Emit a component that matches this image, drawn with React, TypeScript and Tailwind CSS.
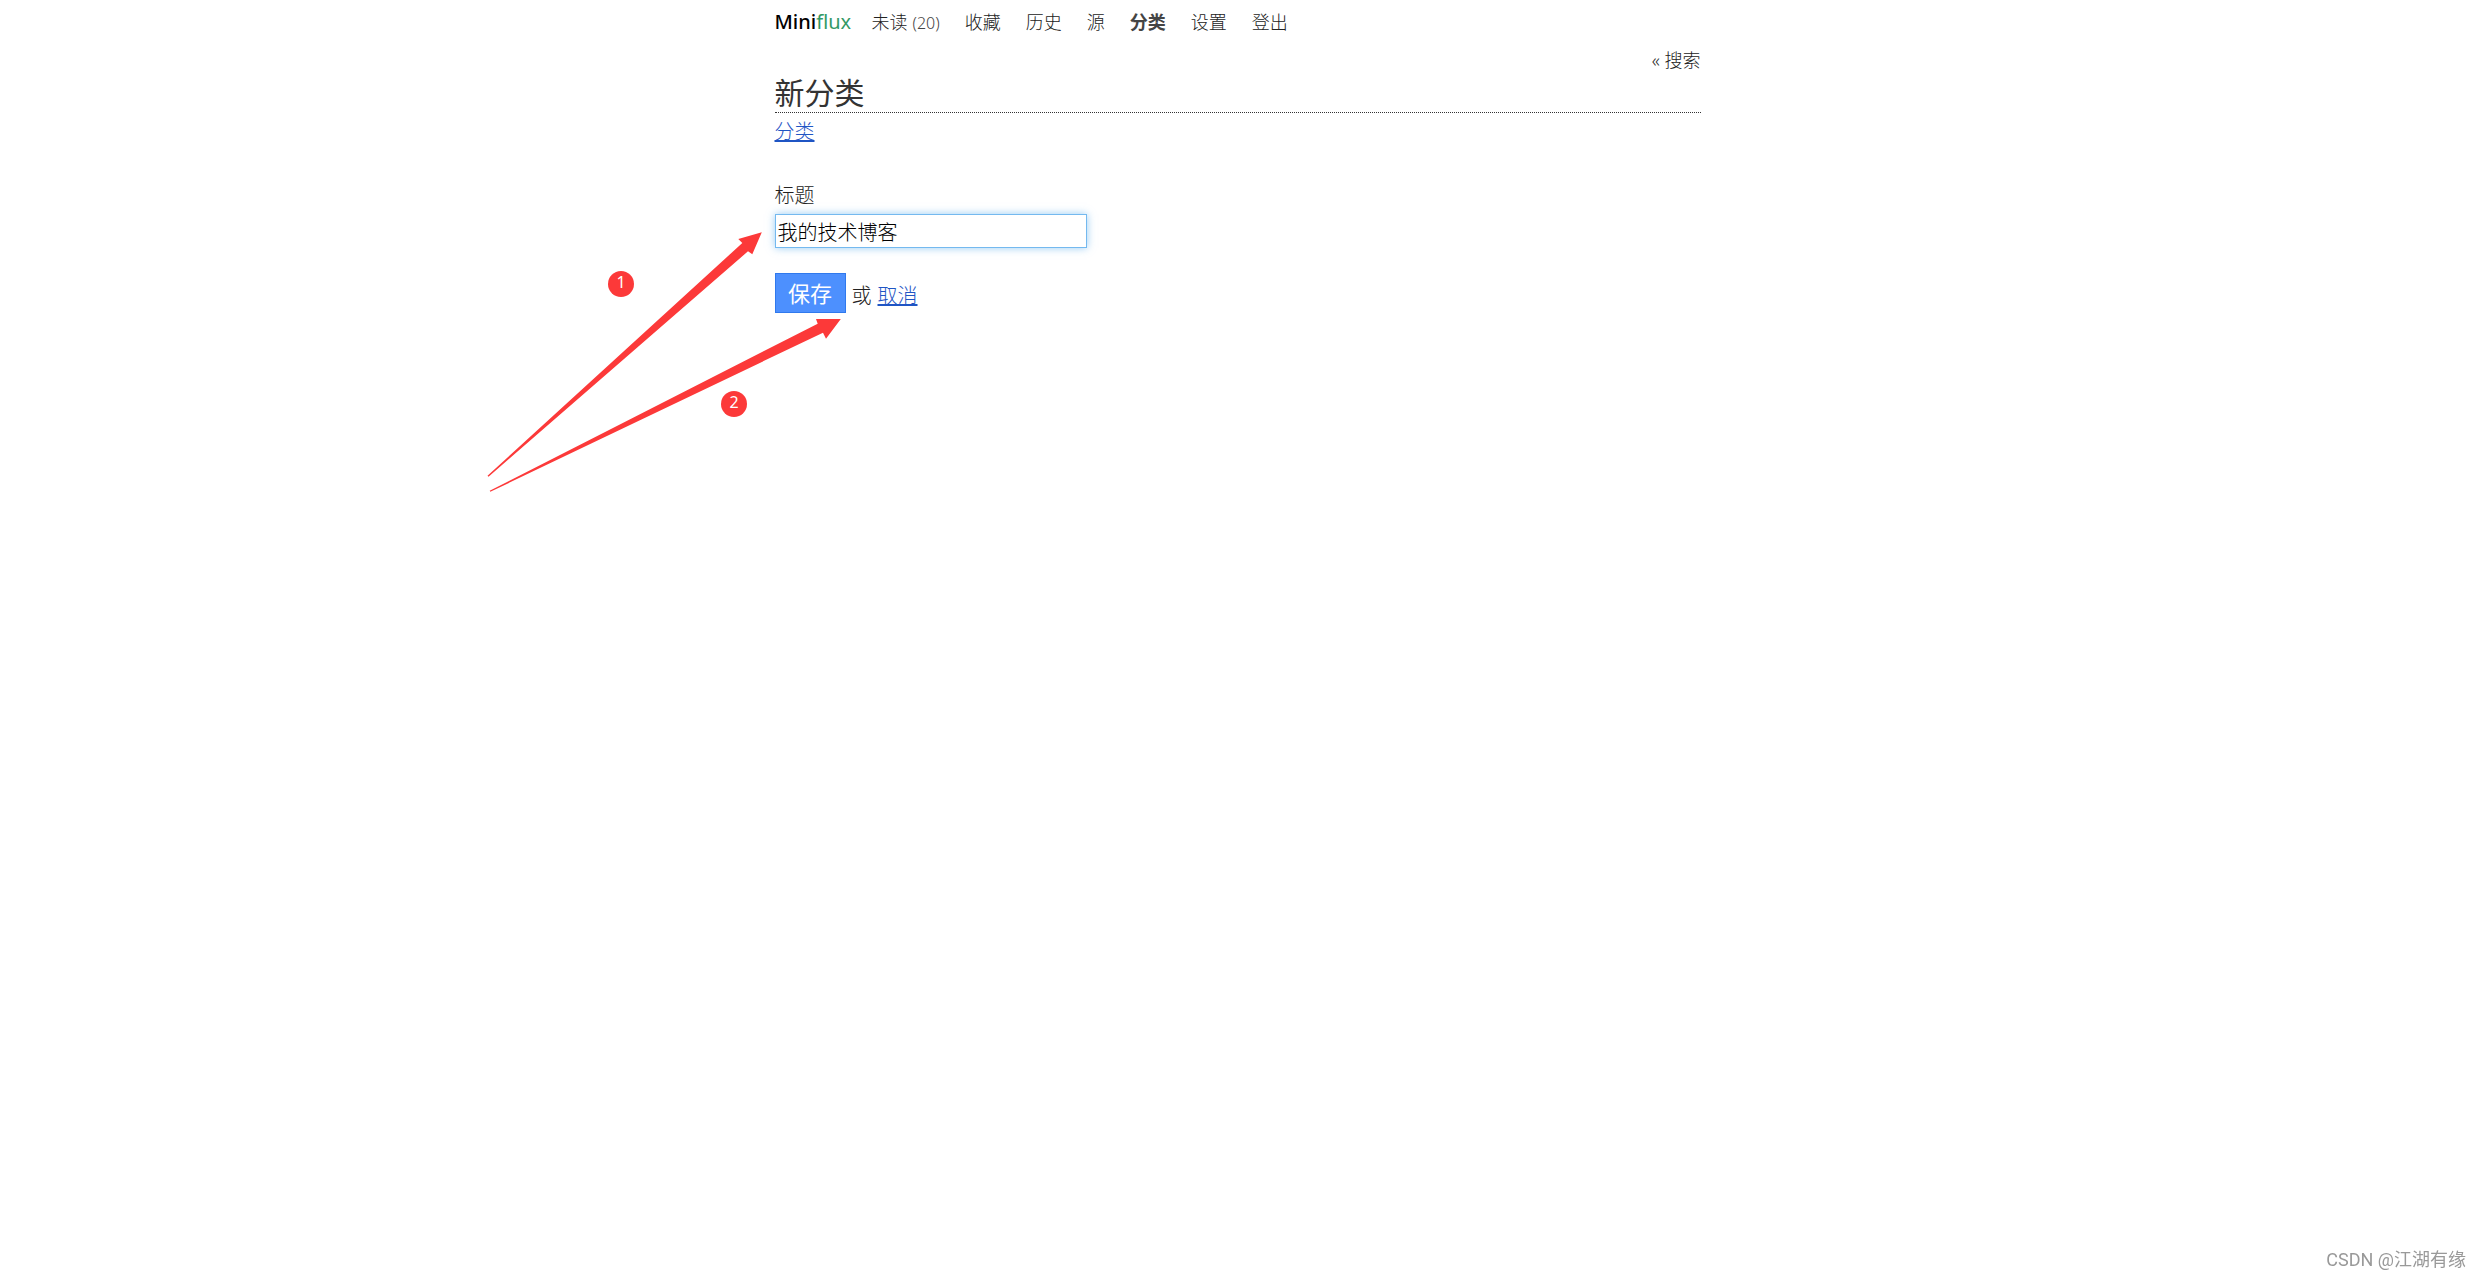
import { useState } from 'react';

interface NavItem {
  label: string;
  href: string;
  count?: number;
  active?: boolean;
}

const navItems: NavItem[] = [
  { label: '未读', href: '#unread', count: 20 },
  { label: '收藏', href: '#starred' },
  { label: '历史', href: '#history' },
  { label: '源', href: '#feeds' },
  { label: '分类', href: '#categories', active: true },
  { label: '设置', href: '#settings' },
  { label: '登出', href: '#logout' },
];

function Header() {
  return (
    <header className="flex items-center gap-[19px] pt-1 h-10">
      <a href="#unread" className="w-[78px] text-[20px] leading-6 font-medium text-black">
        Mini<span className="font-normal text-[#339966]">flux</span>
      </a>
      <nav>
        <ul className="flex gap-[25px] text-[18px] leading-6 text-[#222]">
          {navItems.map((item) => (
            <li key={item.href}>
              <a href={item.href} className={item.active ? 'font-bold text-[#444]' : ''}>
                {item.label}
                {item.count && <span className="ml-[5px] text-[16px] text-[#444]">({item.count})</span>}
              </a>
            </li>
          ))}
        </ul>
      </nav>
    </header>
  );
}

function CategoryForm() {
  const [title, setTitle] = useState('我的技术博客');

  return (
    <form className="pt-9 text-[20px] leading-7" onSubmit={(e) => e.preventDefault()}>
      <label htmlFor="form-title" className="block">
        标题
      </label>
      <input
        id="form-title"
        type="text"
        value={title}
        onChange={(e) => setTitle(e.target.value)}
        className="mt-1 block h-[34px] w-[312px] border border-[#74b9ef] bg-white px-0.5 text-black shadow-[0_0_8px_rgb(82_168_236/0.6)] outline-none"
      />
      <div className="mt-[25px] flex items-end gap-[6px]">
        <button
          type="submit"
          className="h-10 w-[71px] border border-[#3079ed] bg-[#4d90fe] text-[22px] font-normal text-white"
        >
          保存
        </button>
        <span className="pb-[3px]">或</span>
        <a href="#categories" className="pb-[3px] text-[#1f55c4] underline">
          取消
        </a>
      </div>
    </form>
  );
}

// Two tapered arrows with numbered markers, drawn over the form
function Annotations() {
  return (
    <svg
      className="pointer-events-none absolute top-[220px] -left-[295px]"
      width="370"
      height="280"
      viewBox="480 220 370 280"
      fill="#fc3939"
      aria-hidden="true"
    >
      <path d="M487.5 475.8 L742.3 243 L738.3 239 L761.8 232.2 L752.3 254.3 L748 251.3 L488.5 476.8 Z" />
      <path d="M489.7 490.8 L817.7 323.7 L816 319 L840.8 319 L826 338.7 L823 332.7 L490.3 491.8 Z" />
      <circle cx="621" cy="284" r="13" />
      <circle cx="734" cy="404" r="13" />
      <g fill="#fff" fontSize="16" fontWeight="400" textAnchor="middle">
        <text x="621" y="288">1</text>
        <text x="734" y="408">2</text>
      </g>
    </svg>
  );
}

export default function App() {
  return (
    <div className="min-h-screen bg-white pr-[6px] font-['Noto_Sans','Noto_Sans_CJK_SC',sans-serif] font-light text-[#222]">
      <div className="relative mx-auto w-full max-w-[926px]">
        <Header />
        <div className="flex justify-end pt-2 text-[18px] leading-6">
          <a href="#search">« 搜索</a>
        </div>
        <main>
          <section className="border-b border-dotted border-[#333] pt-0.5">
            <h1 className="text-[30px] leading-[38px] font-normal text-[#333]">新分类</h1>
          </section>
          <ul className="pt-[5px] text-[20px] leading-7">
            <li>
              <a href="#categories" className="text-[#1f55c4] underline">
                分类
              </a>
            </li>
          </ul>
          <CategoryForm />
        </main>
        <Annotations />
      </div>
      <div className="fixed right-[15px] bottom-[6px] font-['Roboto','Noto_Sans_CJK_SC',sans-serif] text-[18px] leading-6 font-normal text-[#999]">
        CSDN @江湖有缘
      </div>
    </div>
  );
}
